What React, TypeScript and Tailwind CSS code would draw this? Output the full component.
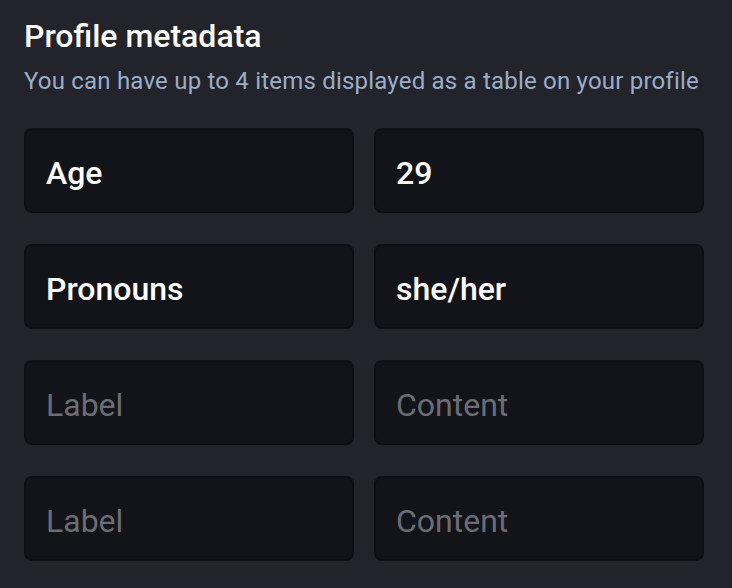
import React from 'react';

const rows = [
  { label: 'Age', content: '29' },
  { label: 'Pronouns', content: 'she/her' },
  { label: '', content: '' },
  { label: '', content: '' },
];

const Field: React.FC<{ value: string; placeholder: string }> = ({ value, placeholder }) => (
  <input
    readOnly
    value={value}
    placeholder={placeholder}
    className="h-[85px] w-full rounded-[8px] border-2 border-[#0e0f13] bg-[#131419] px-[20px] pt-[4px] text-[32px] font-medium text-white outline-none placeholder:font-normal placeholder:text-[#6c6d72]"
  />
);

export default function App() {
  return (
    <div className="h-[588px] w-[732px] bg-[#22232b] pl-[24px] pr-[28px] pt-[17px] font-['Roboto',sans-serif]">
      <h3 className="text-[32px] leading-[38px] font-medium text-white">Profile metadata</h3>
      <p className="mt-[11px] text-[24px] leading-[30px] text-[#9baec8] tracking-[0.2px]">
        You can have up to 4 items displayed as a table on your profile
      </p>
      <div className="mt-[32px] flex flex-col gap-[31px]">
        {rows.map((r, i) => (
          <div key={i} className="grid grid-cols-2 gap-[20px]">
            <Field value={r.label} placeholder="Label" />
            <Field value={r.content} placeholder="Content" />
          </div>
        ))}
      </div>
    </div>
  );
}
